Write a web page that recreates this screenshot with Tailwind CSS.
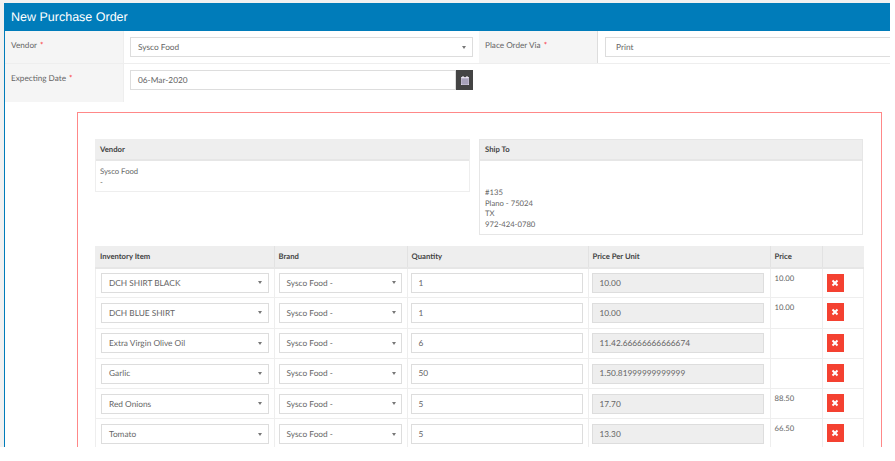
<!DOCTYPE html>
<html lang="en">
<head>
  <meta charset="UTF-8">
  <title>New Purchase Order</title>
  <script src="https://cdn.jsdelivr.net/npm/@tailwindcss/browser@4"></script>
</head>
<body class="bg-white font-['Lato','Liberation_Sans',sans-serif] text-[7.7px] text-[#666] overflow-hidden [text-rendering:geometricPrecision]">
  <div class="h-[447px] w-[890px] bg-[#f1f1f1] pt-[3px] pl-[4px] overflow-hidden">
    <div class="h-[444px] w-[886px] overflow-hidden border-l border-[#007cba] bg-white">
      <!-- Header -->
      <div class="-ml-[1px] flex h-[28px] items-center bg-[#007cba] pl-[7px] font-['Liberation_Sans',sans-serif] text-[12.5px] text-white">New Purchase Order</div>

      <!-- Form -->
      <div class="flex h-[33px] border-b border-[#eee]">
        <div class="w-[119px] shrink-0 border-r border-[#eee] bg-[#f5f5f5] pt-[9px] pl-[6px] text-[8.2px] leading-[10px]">Vendor <span class="ml-[1px] text-red-500">*</span></div>
        <div class="w-[355px] shrink-0 pt-[6px] pl-[6px]">
          <div class="flex h-[20px] w-[343px] items-center justify-between border border-[#ddd] pr-[6px] pl-[7px] text-[8.3px]">
            <span>Sysco Food</span><span class="h-0 w-0 border-x-[2.5px] border-t-[3px] border-x-transparent border-t-[#777]"></span>
          </div>
        </div>
        <div class="w-[119px] shrink-0 border-r border-[#ddd] bg-[#f5f5f5] pt-[9px] pl-[6px] text-[8.2px] leading-[10px]">Place Order Via <span class="ml-[1px] text-red-500">*</span></div>
        <div class="flex-1 pt-[6px] pl-[7px]">
          <div class="flex h-[20px] items-center border border-r-0 border-[#ddd] pl-[10px] text-[8.3px]">Print</div>
        </div>
      </div>
      <div class="flex h-[38px]">
        <div class="w-[119px] shrink-0 border-r border-[#eee] bg-[#f5f5f5] pt-[9px] pl-[6px] text-[8.2px] leading-[10px]">Expecting Date <span class="ml-[1px] text-red-500">*</span></div>
        <div class="flex pt-[6px] pl-[6px]">
          <div class="flex h-[20px] w-[326px] items-center border border-[#ddd] pl-[7px] text-[8.3px]">06-Mar-2020</div>
          <div class="flex h-[20px] w-[17px] items-center justify-center bg-[#444]">
            <svg width="8" height="9" viewBox="0 0 8 9"><rect x="0" y="1" width="8" height="8" fill="#d8d0e4"/><rect x="1.5" y="0" width="1" height="2" fill="#fff"/><rect x="5.5" y="0" width="1" height="2" fill="#fff"/><path d="M0 3h8M0 5h8M0 7h8M2 3v6M4 3v6M6 3v6" stroke="#6b6480" stroke-width=".5"/></svg>
          </div>
        </div>
      </div>

      <!-- Order preview -->
      <div class="mt-[10px] ml-[72px] h-[400px] w-[805px] border border-[#f88] px-[17px] pt-[26px]">
        <div class="flex w-[768px] items-start justify-between">
          <div class="h-[53px] w-[375px] border border-[#eee]">
            <div class="flex h-[21px] items-center border-b-2 border-[#e6e6e6] bg-[#eee] pl-[4px] font-bold text-[#444]">Vendor</div>
            <div class="pt-[5px] pl-[4px] leading-[10.6px]">Sysco Food<br>-</div>
          </div>
          <div class="h-[96px] w-[384px] border border-[#e6e6e6]">
            <div class="flex h-[21px] items-center border-b-2 border-[#e6e6e6] bg-[#eee] pl-[5px] font-bold text-[#444]">Ship To</div>
            <div class="pt-[26px] pl-[5px] leading-[10.6px]">#135<br>Plano - 75024<br>TX<br>972-424-0780</div>
          </div>
        </div>

        <table class="mt-[11px] w-[768px] table-fixed border-collapse border border-[#eee]">
          <colgroup>
            <col class="w-[178.5px]"><col class="w-[133px]"><col class="w-[181px]"><col class="w-[182px]"><col class="w-[52px]"><col class="w-[41.5px]">
          </colgroup>
          <thead>
            <tr class="h-[21px] border-b-2 border-[#e6e6e6] bg-[#eee] text-left text-[#444]">
              <th class="border-r border-[#e2e2e2] pl-[4px] font-bold">Inventory Item</th>
              <th class="border-r border-[#e2e2e2] pl-[4px] font-bold">Brand</th>
              <th class="border-r border-[#e2e2e2] pl-[4px] font-bold">Quantity</th>
              <th class="border-r border-[#e2e2e2] pl-[4px] font-bold">Price Per Unit</th>
              <th class="border-r border-[#e2e2e2] pl-[4px] font-bold">Price</th>
              <th></th>
            </tr>
          </thead>
          <tbody>
            <tr class="h-[30.3px] border-b border-[#eee]">
              <td class="border-r border-[#eee] pl-[5px]"><div class="flex h-[20px] w-[168px] items-center justify-between border border-[#ddd] pr-[6px] pl-[7px] text-[8.3px]"><span>DCH SHIRT BLACK</span><span class="h-0 w-0 border-x-[2.5px] border-t-[3px] border-x-transparent border-t-[#777]"></span></div></td>
              <td class="border-r border-[#eee] pl-[4px]"><div class="flex h-[20px] w-[123px] items-center justify-between border border-[#ddd] pr-[5px] pl-[7px] text-[8.3px]"><span>Sysco Food -</span><span class="h-0 w-0 border-x-[2.5px] border-t-[3px] border-x-transparent border-t-[#777]"></span></div></td>
              <td class="border-r border-[#eee] pl-[3px]"><div class="flex h-[20px] w-[172px] items-center border border-[#ddd] pl-[7px] text-[8.3px]">1</div></td>
              <td class="border-r border-[#eee] pl-[3px]"><div class="flex h-[20px] w-[172px] items-center border border-[#ddd] bg-[#eee] pl-[7px] text-[8.3px]">10.00</div></td>
              <td class="border-r border-[#eee] pt-[4px] pl-[4px] align-top">10.00</td>
              <td class="pt-[5px] pl-[4px] align-top"><div class="flex h-[18px] w-[17px] items-center justify-center bg-[#f44131]"><svg width="8" height="8" viewBox="0 0 8 8"><path d="M1.5 1.5l5 5M6.5 1.5l-5 5" stroke="#fff" stroke-width="2"/></svg></div></td>
            </tr>
            <tr class="h-[30.3px] border-b border-[#eee]">
              <td class="border-r border-[#eee] pl-[5px]"><div class="flex h-[20px] w-[168px] items-center justify-between border border-[#ddd] pr-[6px] pl-[7px] text-[8.3px]"><span>DCH BLUE SHIRT</span><span class="h-0 w-0 border-x-[2.5px] border-t-[3px] border-x-transparent border-t-[#777]"></span></div></td>
              <td class="border-r border-[#eee] pl-[4px]"><div class="flex h-[20px] w-[123px] items-center justify-between border border-[#ddd] pr-[5px] pl-[7px] text-[8.3px]"><span>Sysco Food -</span><span class="h-0 w-0 border-x-[2.5px] border-t-[3px] border-x-transparent border-t-[#777]"></span></div></td>
              <td class="border-r border-[#eee] pl-[3px]"><div class="flex h-[20px] w-[172px] items-center border border-[#ddd] pl-[7px] text-[8.3px]">1</div></td>
              <td class="border-r border-[#eee] pl-[3px]"><div class="flex h-[20px] w-[172px] items-center border border-[#ddd] bg-[#eee] pl-[7px] text-[8.3px]">10.00</div></td>
              <td class="border-r border-[#eee] pt-[4px] pl-[4px] align-top">10.00</td>
              <td class="pt-[5px] pl-[4px] align-top"><div class="flex h-[18px] w-[17px] items-center justify-center bg-[#f44131]"><svg width="8" height="8" viewBox="0 0 8 8"><path d="M1.5 1.5l5 5M6.5 1.5l-5 5" stroke="#fff" stroke-width="2"/></svg></div></td>
            </tr>
            <tr class="h-[30.3px] border-b border-[#eee]">
              <td class="border-r border-[#eee] pl-[5px]"><div class="flex h-[20px] w-[168px] items-center justify-between border border-[#ddd] pr-[6px] pl-[7px] text-[8.3px]"><span>Extra Virgin Olive Oil</span><span class="h-0 w-0 border-x-[2.5px] border-t-[3px] border-x-transparent border-t-[#777]"></span></div></td>
              <td class="border-r border-[#eee] pl-[4px]"><div class="flex h-[20px] w-[123px] items-center justify-between border border-[#ddd] pr-[5px] pl-[7px] text-[8.3px]"><span>Sysco Food -</span><span class="h-0 w-0 border-x-[2.5px] border-t-[3px] border-x-transparent border-t-[#777]"></span></div></td>
              <td class="border-r border-[#eee] pl-[3px]"><div class="flex h-[20px] w-[172px] items-center border border-[#ddd] pl-[7px] text-[8.3px]">6</div></td>
              <td class="border-r border-[#eee] pl-[3px]"><div class="flex h-[20px] w-[172px] items-center border border-[#ddd] bg-[#eee] pl-[7px] text-[8.3px]">11.42.66666666666674</div></td>
              <td class="border-r border-[#eee] pt-[4px] pl-[4px] align-top"></td>
              <td class="pt-[5px] pl-[4px] align-top"><div class="flex h-[18px] w-[17px] items-center justify-center bg-[#f44131]"><svg width="8" height="8" viewBox="0 0 8 8"><path d="M1.5 1.5l5 5M6.5 1.5l-5 5" stroke="#fff" stroke-width="2"/></svg></div></td>
            </tr>
            <tr class="h-[30.3px] border-b border-[#eee]">
              <td class="border-r border-[#eee] pl-[5px]"><div class="flex h-[20px] w-[168px] items-center justify-between border border-[#ddd] pr-[6px] pl-[7px] text-[8.3px]"><span>Garlic</span><span class="h-0 w-0 border-x-[2.5px] border-t-[3px] border-x-transparent border-t-[#777]"></span></div></td>
              <td class="border-r border-[#eee] pl-[4px]"><div class="flex h-[20px] w-[123px] items-center justify-between border border-[#ddd] pr-[5px] pl-[7px] text-[8.3px]"><span>Sysco Food -</span><span class="h-0 w-0 border-x-[2.5px] border-t-[3px] border-x-transparent border-t-[#777]"></span></div></td>
              <td class="border-r border-[#eee] pl-[3px]"><div class="flex h-[20px] w-[172px] items-center border border-[#ddd] pl-[7px] text-[8.3px]">50</div></td>
              <td class="border-r border-[#eee] pl-[3px]"><div class="flex h-[20px] w-[172px] items-center border border-[#ddd] bg-[#eee] pl-[7px] text-[8.3px]">1.50.81999999999999</div></td>
              <td class="border-r border-[#eee] pt-[4px] pl-[4px] align-top"></td>
              <td class="pt-[5px] pl-[4px] align-top"><div class="flex h-[18px] w-[17px] items-center justify-center bg-[#f44131]"><svg width="8" height="8" viewBox="0 0 8 8"><path d="M1.5 1.5l5 5M6.5 1.5l-5 5" stroke="#fff" stroke-width="2"/></svg></div></td>
            </tr>
            <tr class="h-[30.3px] border-b border-[#eee]">
              <td class="border-r border-[#eee] pl-[5px]"><div class="flex h-[20px] w-[168px] items-center justify-between border border-[#ddd] pr-[6px] pl-[7px] text-[8.3px]"><span>Red Onions</span><span class="h-0 w-0 border-x-[2.5px] border-t-[3px] border-x-transparent border-t-[#777]"></span></div></td>
              <td class="border-r border-[#eee] pl-[4px]"><div class="flex h-[20px] w-[123px] items-center justify-between border border-[#ddd] pr-[5px] pl-[7px] text-[8.3px]"><span>Sysco Food -</span><span class="h-0 w-0 border-x-[2.5px] border-t-[3px] border-x-transparent border-t-[#777]"></span></div></td>
              <td class="border-r border-[#eee] pl-[3px]"><div class="flex h-[20px] w-[172px] items-center border border-[#ddd] pl-[7px] text-[8.3px]">5</div></td>
              <td class="border-r border-[#eee] pl-[3px]"><div class="flex h-[20px] w-[172px] items-center border border-[#ddd] bg-[#eee] pl-[7px] text-[8.3px]">17.70</div></td>
              <td class="border-r border-[#eee] pt-[4px] pl-[4px] align-top">88.50</td>
              <td class="pt-[5px] pl-[4px] align-top"><div class="flex h-[18px] w-[17px] items-center justify-center bg-[#f44131]"><svg width="8" height="8" viewBox="0 0 8 8"><path d="M1.5 1.5l5 5M6.5 1.5l-5 5" stroke="#fff" stroke-width="2"/></svg></div></td>
            </tr>
            <tr class="h-[30.3px] border-b border-[#eee]">
              <td class="border-r border-[#eee] pl-[5px]"><div class="flex h-[20px] w-[168px] items-center justify-between border border-[#ddd] pr-[6px] pl-[7px] text-[8.3px]"><span>Tomato</span><span class="h-0 w-0 border-x-[2.5px] border-t-[3px] border-x-transparent border-t-[#777]"></span></div></td>
              <td class="border-r border-[#eee] pl-[4px]"><div class="flex h-[20px] w-[123px] items-center justify-between border border-[#ddd] pr-[5px] pl-[7px] text-[8.3px]"><span>Sysco Food -</span><span class="h-0 w-0 border-x-[2.5px] border-t-[3px] border-x-transparent border-t-[#777]"></span></div></td>
              <td class="border-r border-[#eee] pl-[3px]"><div class="flex h-[20px] w-[172px] items-center border border-[#ddd] pl-[7px] text-[8.3px]">5</div></td>
              <td class="border-r border-[#eee] pl-[3px]"><div class="flex h-[20px] w-[172px] items-center border border-[#ddd] bg-[#eee] pl-[7px] text-[8.3px]">13.30</div></td>
              <td class="border-r border-[#eee] pt-[4px] pl-[4px] align-top">66.50</td>
              <td class="pt-[5px] pl-[4px] align-top"><div class="flex h-[18px] w-[17px] items-center justify-center bg-[#f44131]"><svg width="8" height="8" viewBox="0 0 8 8"><path d="M1.5 1.5l5 5M6.5 1.5l-5 5" stroke="#fff" stroke-width="2"/></svg></div></td>
            </tr>
          </tbody>
        </table>
      </div>
    </div>
  </div>
</body>
</html>
